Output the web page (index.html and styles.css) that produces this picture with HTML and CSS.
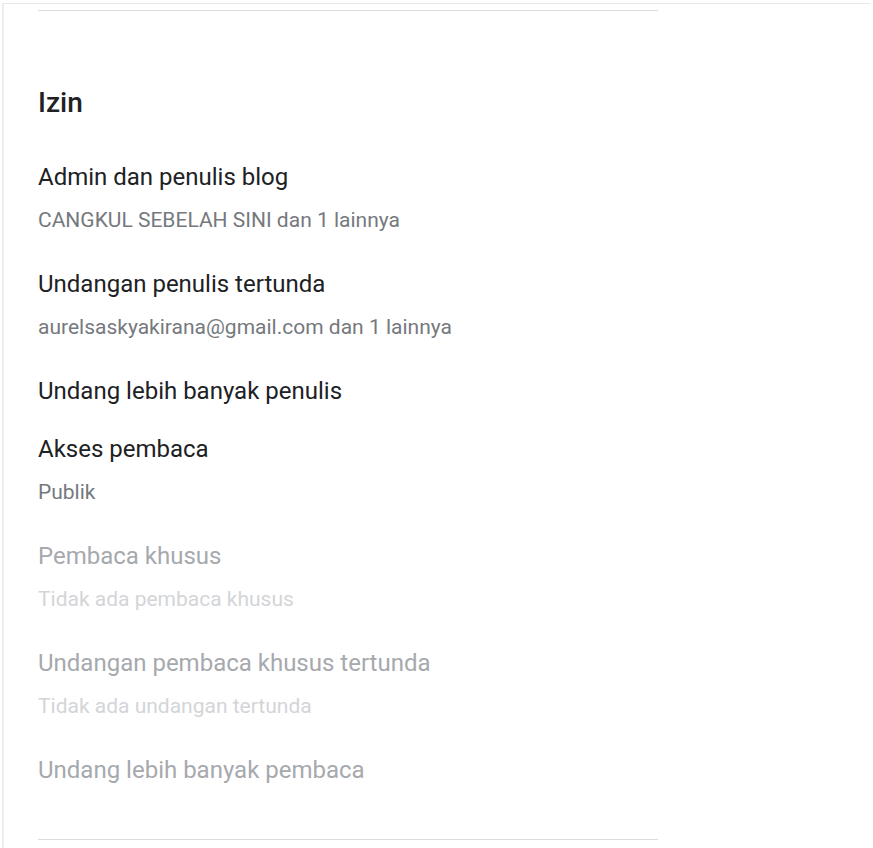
FILE: index.html
```html
<!DOCTYPE html>
<html lang="id">
<head>
    <meta charset="UTF-8">
    <title>Setelan - Izin</title>
    <link rel="stylesheet" href="styles.css">
</head>
<body>
<div class="panel">
    <div class="section">
        <hr class="divider">
        <h2 class="section-title">Izin</h2>

        <div class="item">
            <p class="item-title">Admin dan penulis blog</p>
            <p class="item-sub">CANGKUL SEBELAH SINI dan 1 lainnya</p>
        </div>
        <div class="item">
            <p class="item-title">Undangan penulis tertunda</p>
            <p class="item-sub">aurelsaskyakirana@gmail.com dan 1 lainnya</p>
        </div>
        <div class="item">
            <p class="item-title">Undang lebih banyak penulis</p>
        </div>
        <div class="item">
            <p class="item-title">Akses pembaca</p>
            <p class="item-sub">Publik</p>
        </div>
        <div class="item disabled">
            <p class="item-title">Pembaca khusus</p>
            <p class="item-sub">Tidak ada pembaca khusus</p>
        </div>
        <div class="item disabled">
            <p class="item-title">Undangan pembaca khusus tertunda</p>
            <p class="item-sub">Tidak ada undangan tertunda</p>
        </div>
        <div class="item disabled">
            <p class="item-title">Undang lebih banyak pembaca</p>
        </div>

        <hr class="divider bottom">
    </div>
</div>
</body>
</html>
```

FILE: styles.css
```css
*{
    margin: 0;
    padding: 0;
}
body{
    background: #fff;
    font-family: Roboto, "Noto Sans", Arial, sans-serif;
    color: #202124;
}
.panel{
    margin: 3px 3px 0 2px;
    border-top: 1px solid #e8e8e8;
    border-left: 2px solid #ededed;
    height: calc(100vh - 4px);
    overflow: hidden;
}
.section{
    width: 620px;
    padding: 6px 0 0 34px;
}
.divider{
    border: 0;
    border-top: 1px solid #dadce0;
}
.divider.bottom{
    margin-top: 25px;
}
.section-title{
    font-size: 28px;
    font-weight: 500;
    line-height: 32px;
    margin-top: 76px;
    margin-bottom: 44px;
}
.item{
    padding: 0 0 30px;
}
.item-title{
    font-size: 24px;
    line-height: 28px;
    color: #202124;
}
.item-sub{
    font-size: 21px;
    line-height: 24px;
    color: #75797e;
    margin-top: 17px;
    margin-bottom: 8px;
}
.disabled .item-title{
    color: #a6a9ad;
}
.disabled .item-sub{
    color: #d3d5d8;
}
```
